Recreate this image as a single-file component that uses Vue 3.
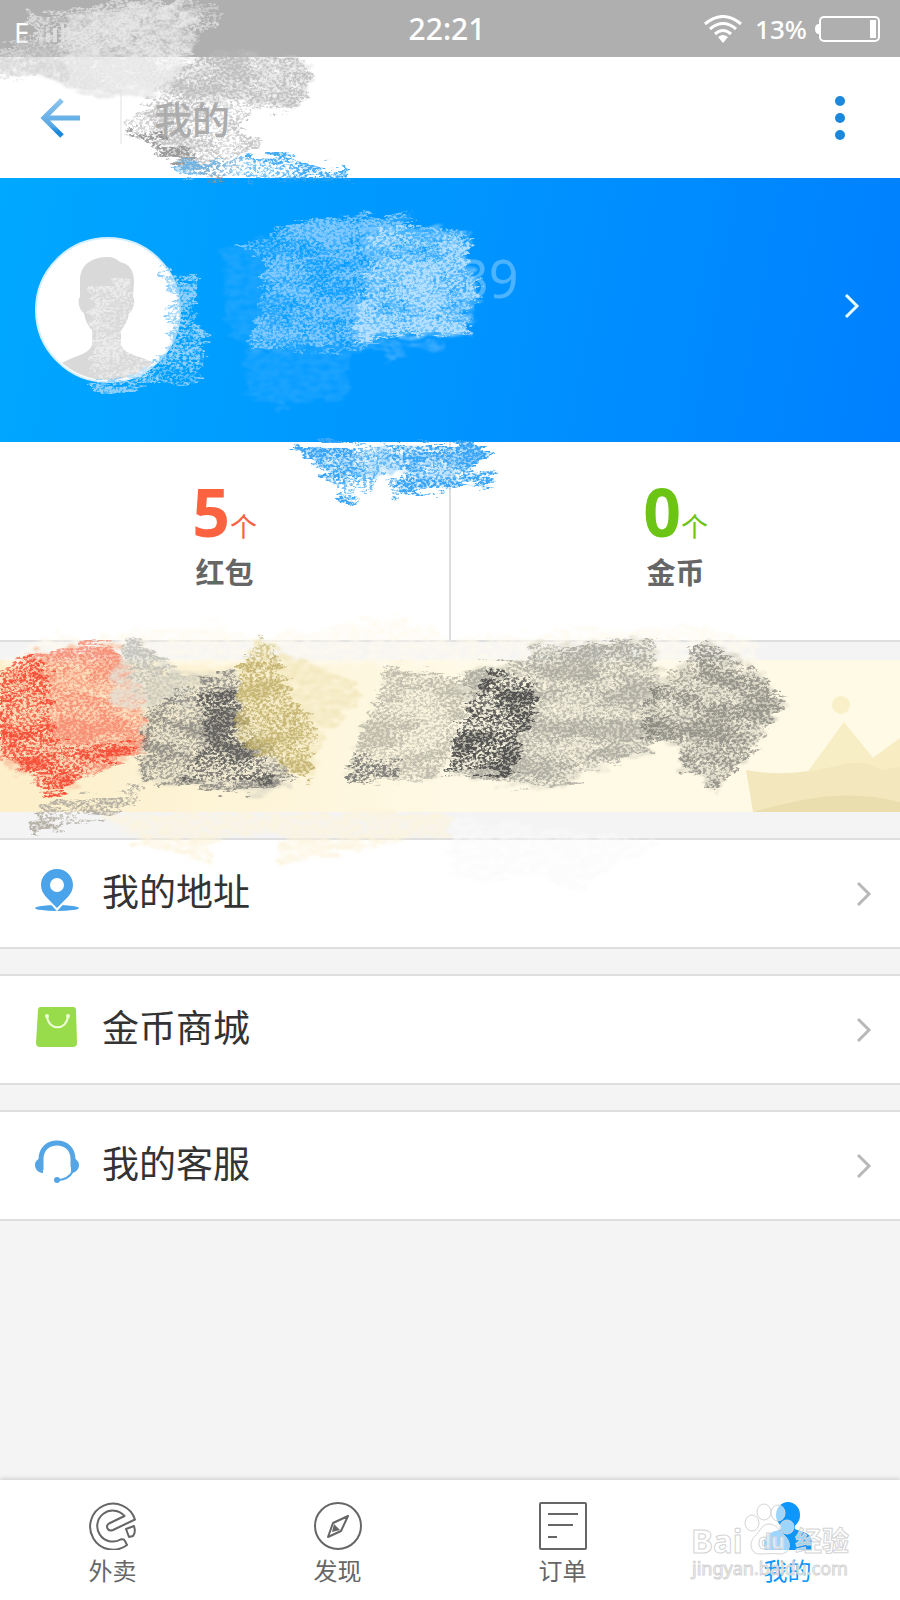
<script setup>
import { ref } from 'vue'

const stats = [
  { count: 5, label: '红包', tone: 'red' },
  { count: 0, label: '金币', tone: 'green' },
]

const menu = [
  { icon: 'pin', label: '我的地址' },
  { icon: 'bag', label: '金币商城' },
  { icon: 'headset', label: '我的客服' },
]

const tabs = [
  { id: 'food', label: '外卖' },
  { id: 'discover', label: '发现' },
  { id: 'orders', label: '订单' },
  { id: 'mine', label: '我的' },
]

const activeTab = ref('mine')

// Crayon marks drawn over the page, bottom layer first
const scribbles = [
  // status bar and header
  { fill: '#e2e2e2', opacity: 0.8, grain: 'rough', points: '25,8 60,12 115,0 215,0 222,20 190,45 178,85 80,92 55,78 0,80 0,45 35,32' },
  { fill: '#c9c9c9', opacity: 0.6, grain: 'soft', points: '0,45 50,45 120,55 175,65 220,50 310,60 305,98 255,105 178,95 80,92 55,78 0,78' },
  { fill: '#b0b0b0', opacity: 0.7, grain: 'rough', points: '175,75 228,28 250,56 310,60 305,98 300,108 255,110 240,125 258,142 240,160 218,184 122,128 150,100' },
  { fill: '#f0f0f0', opacity: 0.7, grain: 'soft', points: '70,15 200,5 190,45 165,95 75,92 60,50' },
  { fill: '#888888', opacity: 0.7, grain: 'rough', points: '120,124 140,128 230,178 214,186' },
  { fill: '#6bb9ee', opacity: 0.9, grain: 'rough', points: '165,165 245,158 245,178 185,178' },
  { fill: '#30a2f6', opacity: 0.9, grain: 'rough', points: '245,155 262,155 290,157 335,171 345,165 352,182 245,182' },
  // profile
  { fill: '#39adff', opacity: 0.5, grain: 'soft', points: '222,248 290,238 280,345 350,350 348,396 268,408 246,392 245,350 228,335' },
  { fill: '#39adff', opacity: 0.6, grain: 'soft', points: '285,228 415,214 395,230 375,345 360,351 248,348 262,300' },
  { fill: '#9ad2ff', opacity: 0.8, grain: 'rough', points: '285,228 315,218 415,214 395,230 372,242 375,345 360,351 248,348 262,300 265,262 240,246' },
  { fill: '#7cc8ff', opacity: 0.8, grain: 'soft', points: '362,236 395,228 472,231 465,255 478,288 468,334 355,338 362,300 370,260' },
  { fill: '#c0e4ff', opacity: 0.9, grain: 'rough', points: '362,236 395,228 472,231 465,255 478,288 468,334 355,338 362,300 370,260' },
  { fill: '#50b4ff', opacity: 0.7, grain: 'soft', points: '360,343 445,341 445,346 405,352 388,366 385,352' },
  { fill: '#91d0fb', opacity: 1, grain: 'rough', points: '180,280 197,275 195,300 190,325 205,327 200,380 88,393 88,383 130,381 165,350 176,325 164,310 178,300 155,265' },
  { fill: '#ffffff', opacity: 0.5, grain: 'rough', points: '88,286 132,278 135,325 122,345 150,362 150,378 95,380 92,310' },
  { fill: '#8cccfb', opacity: 0.7, grain: 'soft', points: '310,450 480,450 478,462 440,482 400,470 372,484 345,474 350,492 325,472' },
  { fill: '#3ba6f7', opacity: 1, grain: 'rough', points: '290,444 488,444 488,458 465,470 496,472 495,482 390,498 388,486 408,475 387,466 372,490 345,480 360,503 350,507 335,488 320,472' },
  // banner
  { fill: '#fefaee', opacity: 0.8, grain: 'soft', points: '45,638 225,625 250,640 400,615 450,640 700,625 760,642 758,664 0,664' },
  { fill: '#fcf3da', opacity: 0.8, grain: 'soft', points: '100,812 450,812 450,832 390,846 275,864 282,835 215,838 210,862 130,838' },
  { fill: '#fafafa', opacity: 0.7, grain: 'soft', points: '450,815 660,842 570,892 550,876 450,880' },
  { fill: '#f9bd9c', opacity: 0.8, grain: 'soft', points: '0,673 28,655 112,643 128,665 145,700 147,748 62,790 45,795 45,785 0,760' },
  { fill: '#f67860', opacity: 0.7, grain: 'rough', points: '0,673 28,655 112,643 128,665 145,700 147,748 62,790 45,795 45,785 0,760' },
  { fill: '#f64a34', opacity: 0.9, grain: 'rough', points: '0,673 22,653 48,672 50,700 55,745 145,745 95,765 60,792 42,795 40,780 0,752' },
  { fill: '#e4e3d8', opacity: 0.9, grain: 'soft', points: '112,668 132,638 182,678 190,704 114,710' },
  { fill: '#a09f98', opacity: 0.5, grain: 'rough', points: '120,650 132,636 182,675 232,680 235,702 150,705' },
  { fill: '#d8d4c2', opacity: 0.7, grain: 'soft', points: '150,675 232,670 240,700 297,783 250,793 138,780 145,755 142,740' },
  { fill: '#606060', opacity: 0.6, grain: 'rough', points: '178,690 232,670 240,700 297,783 250,793 138,780 145,755 142,740 148,708' },
  { fill: '#505050', opacity: 0.7, grain: 'rough', points: '198,695 235,690 242,735 278,780 180,778 208,740' },
  { fill: '#b0aba0', opacity: 0.9, grain: 'rough', points: '30,828 38,806 140,788 140,803 34,834' },
  { fill: '#f0e5b8', opacity: 0.8, grain: 'soft', points: '258,640 360,685 362,700 325,730 310,782 238,742 238,668' },
  { fill: '#b5a254', opacity: 0.7, grain: 'rough', points: '258,640 272,644 285,680 315,730 310,782 238,742 238,668' },
  { fill: '#eeead2', opacity: 0.7, grain: 'soft', points: '390,666 468,682 465,710 440,778 345,783 355,745 376,700' },
  { fill: '#8b8b83', opacity: 0.5, grain: 'rough', points: '390,666 468,682 465,710 440,778 345,783 355,745 376,700' },
  { fill: '#666666', opacity: 0.7, grain: 'rough', points: '345,783 355,755 400,765 400,773' },
  { fill: '#e0decc', opacity: 0.8, grain: 'soft', points: '460,672 530,660 530,645 655,639 662,690 655,748 600,767 555,788 450,776 460,740 470,710' },
  { fill: '#777772', opacity: 0.5, grain: 'rough', points: '460,672 530,660 530,645 560,648 655,639 662,690 655,748 600,767 555,788 450,776 460,740 470,710' },
  { fill: '#444444', opacity: 0.85, grain: 'rough', points: '490,672 538,680 535,700 520,745 515,775 448,773 455,738 470,710' },
  { fill: '#d4d1c1', opacity: 0.8, grain: 'soft', points: '705,640 735,655 740,670 752,662 782,705 715,793 706,790 705,777 682,770 680,742 645,740 640,705' },
  { fill: '#6f6f69', opacity: 0.65, grain: 'rough', points: '705,636 710,645 735,655 740,670 752,662 765,680 782,705 755,750 715,793 706,790 705,777 682,770 680,742 645,740 640,705' },
]
</script>

<template>
  <div class="page">
    <header>
      <div class="status-bar">
        <div class="carrier">
          <span>E</span>
          <svg width="28" height="20" viewBox="0 0 28 20" fill="#fff" fill-opacity="0.5">
            <path d="M1 15h4v5H1zM8 11h4v9H8zM15 6h4v14h-4zM23 1h3v19h-3z" />
          </svg>
        </div>
        <span class="clock">22:21</span>
        <div class="status-right">
          <svg width="38" height="28" viewBox="0 0 38 28" fill="none" stroke="#fff" stroke-width="3">
            <path d="M1 9Q19-6 37 9M6 14Q19 3 32 14M11 19Q19 12 27 19" />
            <path d="M14 22q5-4 10 0l-5 6z" fill="#fff" stroke="none" />
          </svg>
          <span class="percent">13%</span>
          <svg width="65" height="26" viewBox="0 0 65 26">
            <path d="M4 8Q0 8 0 13t4 5z" fill="#fff" />
            <rect x="5" y="1" width="59" height="24" rx="4" fill="none" stroke="#fff" stroke-width="2" />
            <rect x="55" y="4" width="6" height="18" fill="#fff" />
          </svg>
        </div>
      </div>
      <div class="title-bar">
        <button class="icon-btn back" aria-label="返回">
          <svg width="40" height="40" viewBox="0 0 40 40" fill="none" stroke-width="5">
            <defs>
              <linearGradient id="arrow" x1="0" y1="0" x2="0" y2="40" gradientUnits="userSpaceOnUse">
                <stop offset="0" stop-color="#8fc5ee" />
                <stop offset="0.7" stop-color="#5aa9e4" />
                <stop offset="0.85" stop-color="#1b88da" />
              </linearGradient>
            </defs>
            <path d="M22 2L4 20l18 18M4 20h36" stroke="url(#arrow)" />
          </svg>
        </button>
        <h1>我的</h1>
        <button class="icon-btn" aria-label="更多">
          <svg width="12" height="46" viewBox="0 0 12 46" fill="#1b88dc">
            <circle cx="6" cy="6" r="5" />
            <circle cx="6" cy="23" r="5" />
            <circle cx="6" cy="40" r="5" />
          </svg>
        </button>
      </div>
    </header>

    <main>
      <a href="#" class="profile">
        <svg class="avatar" width="146" height="146" viewBox="0 0 146 146">
          <defs>
            <clipPath id="face"><circle cx="73" cy="73" r="70" /></clipPath>
          </defs>
          <circle cx="73" cy="73" r="72" fill="#fff" stroke="#d5efff" stroke-width="2" />
          <path
            clip-path="url(#face)"
            fill="#d9d9d9"
            d="M45 42C46 25 60 20 73 20c5 0 9 2 12 5 10 2 14 9 14 20l-1 15c3 3 0 15-4 16-1 8-5 13-8 18v14c3 8 14 10 24 14 12 5 18 10 25 18v20H10v-20c7-8 13-13 25-18 10-4 20-7 22-14V93c-4-4-7-10-8-17-5-2-7-14-4-16z"
          />
        </svg>
        <span class="user-name">39</span>
        <svg class="profile-arrow" width="16" height="26" viewBox="0 0 16 26" fill="none" stroke="#e8fbff" stroke-width="3">
          <path d="M2 2l11 11L2 24" />
        </svg>
      </a>

      <section class="stats">
        <a v-for="stat in stats" :key="stat.label" href="#" class="stat">
          <span class="stat-value" :class="stat.tone">{{ stat.count }}<small>个</small></span>
          <span class="stat-label">{{ stat.label }}</span>
        </a>
      </section>

      <div class="banner">
        <svg width="160" height="152" viewBox="0 0 160 152">
          <circle cx="101" cy="45" r="9" fill="#f9efc8" />
          <path d="M104 62l42 52H66z" fill="#f8eec6" />
          <path d="M160 78l-30 22 30 30z" fill="#f8edc2" />
          <path d="M6 110q40 8 90-4 30-8 45 4l19-3v45H13z" fill="#f3e8bd" />
          <path d="M13 152q50-14 80-16 35-2 67 6v10z" fill="#eadeae" />
        </svg>
      </div>

      <nav class="menu">
        <a v-for="item in menu" :key="item.icon" href="#" class="menu-item">
          <svg class="menu-icon" width="44" height="44" viewBox="0 0 44 44">
            <template v-if="item.icon === 'pin'">
              <ellipse cx="22" cy="40" rx="22" ry="3" fill="#4ba3ea" />
              <path d="M22 41l-9-10h18z" fill="#fff" stroke="#fff" stroke-width="3" />
              <path fill="#4ba3ea" fill-rule="evenodd" d="M22 1C13 1 6 8 6 17c0 10 9 15 16 23 7-8 16-13 16-23C38 8 31 1 22 1zm0 9a7 7 0 1 1 0 14 7 7 0 0 1 0-14z" />
            </template>
            <template v-else-if="item.icon === 'bag'">
              <path d="M6 3h32q3 0 3 3l1 33q0 4-4 4H5q-4 0-4-4L3 6q0-3 3-3z" fill="#98dc4b" />
              <path d="M12 12c1 15 20 15 21 0" fill="none" stroke="#efffd9" stroke-width="2" />
              <circle cx="12" cy="12" r="2" fill="#efffd9" />
              <circle cx="33" cy="12" r="2" fill="#efffd9" />
            </template>
            <template v-else>
              <path d="M6 30V19C6 9 13 3 22 3s16 6 16 16v8" fill="none" stroke="#53a5e6" stroke-width="5" />
              <path d="M8 17v16c-5 0-8-4-8-8s3-6 8-8zM36 17v16c5 0 8-4 8-8s-3-6-8-8z" fill="#53a5e6" />
              <path d="M38 31c-3 6-8 9-16 9" fill="none" stroke="#53a5e6" stroke-width="2" />
              <circle cx="22" cy="40" r="3" fill="#53a5e6" />
            </template>
          </svg>
          <span class="menu-label">{{ item.label }}</span>
          <svg width="16" height="26" viewBox="0 0 16 26" fill="none" stroke="#b8b8b8" stroke-width="3">
            <path d="M1 2l11 11L1 24" />
          </svg>
        </a>
      </nav>
    </main>

    <nav class="tab-bar">
      <button
        v-for="tab in tabs"
        :key="tab.id"
        class="tab"
        :class="{ active: activeTab === tab.id }"
        @click="activeTab = tab.id"
      >
        <svg width="48" height="48" viewBox="0 0 48 48" fill="none" stroke="currentColor" stroke-width="2" stroke-linejoin="round">
          <template v-if="tab.id === 'food'">
            <path d="M46 17.5A23 23 0 1 0 38 43l-2-4q-1-2.500-4.500-1.500A15.500 15.500 0 1 1 35.500 14L20 21.500q-3 2-1.500 5t5.500 1.500z" />
            <path d="M37 27l8-3q2 7-1 10l-4 1z" />
          </template>
          <template v-else-if="tab.id === 'discover'">
            <circle cx="24" cy="24" r="23" />
            <path d="M34 14l-15 7-5 14 13-6z" />
            <path d="M20 22l6 6-8 2z" fill="currentColor" stroke="none" />
          </template>
          <template v-else-if="tab.id === 'orders'">
            <rect x="1" y="1" width="46" height="46" rx="1" />
            <path d="M9 12h30M9 23h25M9 35h9" />
          </template>
          <template v-else>
            <ellipse cx="24" cy="13" rx="12" ry="13" fill="currentColor" stroke="none" />
            <path d="M17 20h14v7c6 3 17 3 17 14v7H0v-7c0-11 11-11 17-14z" fill="currentColor" stroke="none" />
          </template>
        </svg>
        <span>{{ tab.label }}</span>
      </button>
      <svg class="watermark" width="170" height="90" viewBox="0 0 170 90" aria-hidden="true">
        <g fill="#fff" fill-opacity="0.6" stroke="#d4d4d4" stroke-width="1">
          <ellipse cx="64" cy="23" rx="7" ry="8" />
          <ellipse cx="76" cy="12" rx="7" ry="8" />
          <ellipse cx="90" cy="13" rx="7" ry="8" />
          <ellipse cx="99" cy="27" rx="7" ry="7" />
          <path d="M81 24c-7 0-8 6-13 11-8 7-6 19 4 19 7 0 13-1 20 0 10 0 13-11 4-19-5-5-8-11-15-11z" />
          <text class="mark-name" x="3" y="53">Bai</text>
          <text class="mark-du" x="70" y="49">du</text>
          <text class="mark-cjk" x="107" y="51">经验</text>
          <text class="mark-url" x="4" y="75">jingyan.baidu.com</text>
        </g>
      </svg>
    </nav>

    <svg class="scribbles" viewBox="0 0 900 1600" aria-hidden="true">
      <defs>
        <filter id="rough" x="-10%" y="-10%" width="120%" height="120%" color-interpolation-filters="sRGB">
          <feTurbulence type="fractalNoise" baseFrequency="0.04 0.16" numOctaves="3" seed="4" result="waves" />
          <feDisplacementMap in="SourceGraphic" in2="waves" scale="26" xChannelSelector="R" yChannelSelector="G" result="shape" />
          <feTurbulence type="fractalNoise" baseFrequency="0.3 0.4" numOctaves="4" seed="9" result="noise" />
          <feColorMatrix in="noise" values="0 0 0 0 0  0 0 0 0 0  0 0 0 0 0  4 0 0 0 -1.5" result="grain" />
          <feTurbulence type="fractalNoise" baseFrequency="0.02 0.05" numOctaves="3" seed="12" result="clouds" />
          <feColorMatrix in="clouds" values="0 0 0 0 0  0 0 0 0 0  0 0 0 0 0  3 0 0 0 -1" result="density" />
          <feComposite in="grain" in2="density" operator="arithmetic" k2="1" k3="0.7" k4="-0.3" result="wax" />
          <feComposite in="shape" in2="wax" operator="in" />
        </filter>
        <filter id="soft" x="-10%" y="-10%" width="120%" height="120%" color-interpolation-filters="sRGB">
          <feTurbulence type="fractalNoise" baseFrequency="0.04 0.12" numOctaves="3" seed="7" result="waves" />
          <feDisplacementMap in="SourceGraphic" in2="waves" scale="24" xChannelSelector="R" yChannelSelector="G" result="shape" />
          <feTurbulence type="fractalNoise" baseFrequency="0.1 0.2" numOctaves="3" seed="2" result="noise" />
          <feColorMatrix in="noise" values="0 0 0 0 0  0 0 0 0 0  0 0 0 0 0  2 0 0 0 -0.3" result="grain" />
          <feComposite in="shape" in2="grain" operator="in" result="mark" />
          <feGaussianBlur in="mark" stdDeviation="1" />
        </filter>
      </defs>
      <polygon
        v-for="(mark, i) in scribbles"
        :key="i"
        :points="mark.points"
        :fill="mark.fill"
        :opacity="mark.opacity"
        :filter="`url(#${mark.grain})`"
      />
    </svg>
  </div>
</template>

<style>
body {
  margin: 0;
  background: #f4f4f4;
}
</style>

<style scoped>
.page {
  position: relative;
  display: flex;
  flex-direction: column;
  min-height: 100vh;
  overflow: hidden;
  background: #f4f4f4;
  color: #333;
  font-family: 'Noto Sans', 'Noto Sans CJK SC', sans-serif;
}

a {
  color: inherit;
  text-decoration: none;
}

button {
  padding: 0;
  border: 0;
  background: none;
  font: inherit;
  cursor: pointer;
}

svg {
  display: block;
  flex: none;
}

.status-bar {
  display: grid;
  grid-template-columns: 1fr auto 1fr;
  align-items: center;
  height: 57px;
  padding: 0 20px 0 14px;
  background: #afafaf;
  color: #fff;
}

.carrier {
  display: flex;
  align-items: center;
  gap: 8px;
  padding-top: 6px;
  font-size: 28px;
  line-height: 28px;
}

.clock {
  font-size: 30px;
  font-weight: 500;
}

.status-right {
  display: flex;
  align-items: center;
  justify-content: flex-end;
  gap: 8px;
}

.percent {
  padding-left: 5px;
  font-size: 26px;
  font-weight: 500;
}

.title-bar {
  display: flex;
  align-items: center;
  height: 121px;
  padding-right: 54px;
  background: #fff;
}

.icon-btn.back {
  padding: 6px 40px;
  border-right: 2px solid #f0f0f0;
}

h1 {
  flex: 1;
  margin: 0;
  padding-left: 32px;
  color: #aaa;
  font-size: 38px;
  font-weight: 500;
}

.profile {
  display: flex;
  align-items: center;
  height: 264px;
  padding: 0 40px 0 35px;
  box-sizing: border-box;
  background: linear-gradient(100deg, #00a8ff, #0095ff 50%, #0080ff);
}

.user-name {
  flex: 1;
  padding: 0 0 64px 278px;
  color: rgba(255, 255, 255, 0.3);
  font-size: 52px;
  line-height: 52px;
}

.profile-arrow {
  margin-bottom: 8px;
}

.stats {
  display: flex;
  height: 200px;
  box-sizing: border-box;
  border-bottom: 2px solid #dedede;
  background: #fff;
}

.stat {
  display: flex;
  flex: 1;
  flex-direction: column;
  align-items: center;
  padding-top: 38px;
}

.stat + .stat {
  border-left: 2px solid #ddd;
}

.stat-value {
  font-family: 'Open Sans', 'Noto Sans CJK SC', sans-serif;
  font-size: 66px;
  font-weight: 700;
  line-height: 62px;
}

.stat-value small {
  font-size: 27px;
  font-weight: 400;
}

.stat-value.red {
  color: #fb6240;
}

.stat-value.green {
  color: #6cc414;
}

.stat-label {
  color: #666;
  font-size: 29px;
  font-weight: 700;
  line-height: 30px;
}

.banner {
  display: flex;
  justify-content: flex-end;
  height: 152px;
  margin: 18px 0 26px;
  background: linear-gradient(90deg, #fcefc9, #fff9e5 50%, #fffae6);
}

.menu {
  display: flex;
  flex-direction: column;
  gap: 25px;
}

.menu-item {
  display: flex;
  align-items: center;
  height: 111px;
  padding: 0 27px 0 35px;
  box-sizing: border-box;
  border-top: 2px solid #dedede;
  border-bottom: 2px solid #dedede;
  background: #fff;
}

.menu-icon {
  margin-bottom: 8px;
}

.menu-label {
  flex: 1;
  padding: 0 0 4px 23px;
  font-size: 37px;
  font-weight: 400;
  line-height: 56px;
}

.tab-bar {
  position: relative;
  display: flex;
  height: 120px;
  margin-top: auto;
  background: #fff;
  box-shadow: 0 -1px 5px rgba(0, 0, 0, 0.18);
}

.tab {
  display: flex;
  flex: 1;
  flex-direction: column;
  align-items: center;
  gap: 3px;
  padding-top: 22px;
  color: #666;
  font-size: 24px;
  line-height: 36px;
}

.tab.active {
  color: #0d96fb;
}

.watermark {
  position: absolute;
  right: 42px;
  bottom: 10px;
  pointer-events: none;
}

.mark-name {
  font-size: 33px;
  font-weight: 700;
}

.mark-du {
  font-size: 21px;
  font-weight: 700;
}

.mark-cjk {
  font-size: 27px;
  font-weight: 700;
}

.mark-url {
  font-size: 18px;
}

.scribbles {
  position: absolute;
  top: 0;
  left: 0;
  width: 100%;
  pointer-events: none;
}
</style>
